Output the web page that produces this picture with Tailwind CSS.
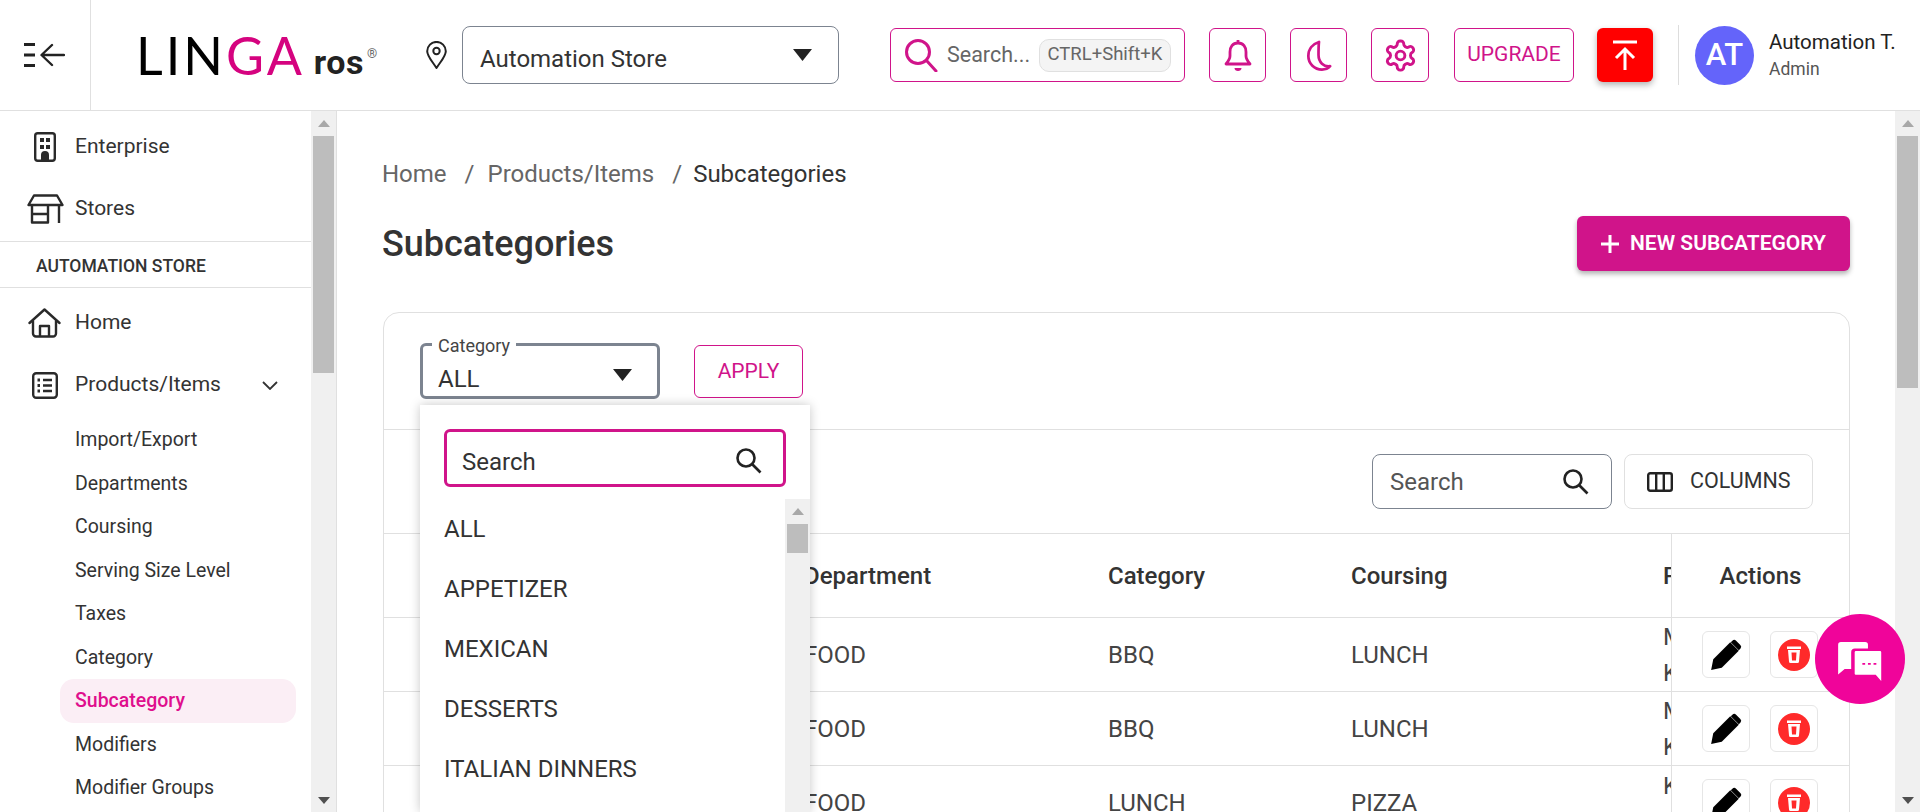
<!DOCTYPE html>
<html>
<head>
<meta charset="utf-8">
<script src="https://cdn.jsdelivr.net/npm/@tailwindcss/browser@4"></script>
</head>
<body class="m-0 h-screen overflow-hidden bg-white font-['Roboto',sans-serif] text-[#333]">
<div class="flex h-screen flex-col">
  <!-- header -->
  <header class="flex h-[111px] shrink-0 items-center border-b border-[#e0e0e0]">
    <div class="flex h-full w-[91px] shrink-0 items-center justify-center border-r border-[#e0e0e0] pr-[2px]">
      <svg width="42" height="26" viewBox="0 0 42 26" fill="none" stroke="#222" stroke-width="2.400"><path d="M1 2.500h11M1 13h11M1 23.500h11" stroke-width="3"/><path d="M41 13H20M29 3 18.500 13 29 23" stroke-linecap="round" stroke-linejoin="round"/></svg>
    </div>
    <div class="ml-[45px] flex w-[289px] shrink-0 items-end">
      <span class="font-['Lato',sans-serif] text-[52px] leading-[52px] font-normal tracking-[3px] text-black">LIN<span class="text-[#d5037f]">GA</span></span>
      <span class="ml-[9px] font-['Roboto',sans-serif] text-[34px] leading-[38px] font-bold tracking-[0.500px] text-[#222]">ros</span>
      <span class="mb-[20px] ml-[3px] text-[13px] leading-[14px] text-[#666]">®</span>
    </div>
    <svg class="ml-[1px] shrink-0" width="21" height="28" viewBox="0 0 21 28" fill="none" stroke="#222" stroke-width="2"><path d="M10.500 27C6 20 1.200 15 1.200 10.200a9.300 9.300 0 0 1 18.600 0C19.800 15 15 20 10.500 27Z" stroke-linejoin="round"/><circle cx="10.500" cy="10" r="3.200"/></svg>
    <div class="relative ml-[15px] flex h-[58px] w-[377px] shrink-0 items-center rounded-[8px] border border-[#7c8490] pt-[8px] pl-[17px] text-[24px] text-[#333]">Automation Store
      <svg class="absolute top-[22px] right-[26px]" width="19" height="12" viewBox="0 0 19 12"><path d="M0 0h19l-9.500 12Z" fill="#222"/></svg>
    </div>
    <div class="ml-[51px] flex h-[54px] w-[295px] shrink-0 items-center rounded-[6px] border border-[#d0148a] pl-[13px]">
      <svg width="34" height="34" viewBox="0 0 34 34" fill="none" stroke="#d0148a" stroke-width="3"><circle cx="14" cy="14" r="11.500"/><path d="M22.500 22.500 32 33" stroke-linecap="round"/></svg>
      <span class="ml-[9px] text-[21.500px] text-[#666]">Search...</span>
      <span class="mr-[13px] ml-auto flex h-[33px] w-[132px] items-center justify-center rounded-[10px] border border-[#e0e0e0] bg-[#f4f4f4] text-[18.500px] font-normal text-[#666]">CTRL+Shift+K</span>
    </div>
    <div class="ml-[24px] flex h-[54px] w-[57px] shrink-0 items-center justify-center rounded-[6px] border border-[#d0148a]">
      <svg width="28" height="34" viewBox="0 0 28 34" fill="none" stroke="#d0148a" stroke-width="2.800"><path d="M14 2v3M14 5c-5.500 0-8 4-8 9v4c0 3-1.500 5-4 8h24c-2.500-3-4-5-4-8v-4c0-5-2.500-9-8-9Z" stroke-linejoin="round"/><path d="M10.500 30h7c0 2-1.500 3-3.500 3s-3.500-1-3.500-3Z" fill="#d0148a" stroke="none"/></svg>
    </div>
    <div class="ml-[24px] flex h-[54px] w-[57px] shrink-0 items-center justify-center rounded-[6px] border border-[#d0148a]">
      <svg width="26" height="31" viewBox="0 0 26 32" fill="none" stroke="#d0148a" stroke-width="2.800"><path d="M13 2C6.500 4 2 9.500 2 16.500 2 24.500 8.500 30.500 16 30.500c3.500 0 6.500-1.200 8.500-3.500-6.500 1-12-4-12-11.500 0-5.500 0-10 .5-13.500Z" stroke-linejoin="round"/></svg>
    </div>
    <div class="ml-[24px] flex h-[54px] w-[58px] shrink-0 items-center justify-center rounded-[6px] border border-[#d0148a]">
      <svg width="35" height="35" viewBox="0 0 24 24" fill="none" stroke="#d0148a" stroke-width="2" stroke-linecap="round" stroke-linejoin="round"><path d="M12.220 2h-.44a2 2 0 0 0-2 2v.18a2 2 0 0 1-1 1.730l-.43.25a2 2 0 0 1-2 0l-.15-.08a2 2 0 0 0-2.730.73l-.22.38a2 2 0 0 0 .73 2.730l.15.1a2 2 0 0 1 1 1.720v.51a2 2 0 0 1-1 1.740l-.15.09a2 2 0 0 0-.73 2.730l.22.38a2 2 0 0 0 2.730.73l.15-.08a2 2 0 0 1 2 0l.43.25a2 2 0 0 1 1 1.730V20a2 2 0 0 0 2 2h.44a2 2 0 0 0 2-2v-.18a2 2 0 0 1 1-1.730l.43-.25a2 2 0 0 1 2 0l.15.08a2 2 0 0 0 2.730-.73l.22-.39a2 2 0 0 0-.73-2.730l-.15-.08a2 2 0 0 1-1-1.740v-.5a2 2 0 0 1 1-1.740l.15-.09a2 2 0 0 0 .73-2.730l-.22-.38a2 2 0 0 0-2.730-.73l-.15.08a2 2 0 0 1-2 0l-.43-.25a2 2 0 0 1-1-1.730V4a2 2 0 0 0-2-2z"/><circle cx="12" cy="12" r="3"/></svg>
    </div>
    <div class="ml-[25px] flex h-[54px] w-[120px] shrink-0 items-center justify-center rounded-[6px] border border-[#d0148a] text-[21px] font-normal text-[#d0148a]">UPGRADE</div>
    <div class="ml-[23px] flex h-[54px] w-[56px] shrink-0 items-center justify-center rounded-[6px] bg-[#ff0000] shadow-[0_3px_6px_rgba(0,0,0,0.3)]">
      <svg width="24" height="30" viewBox="0 0 24 30" fill="none" stroke="#fff" stroke-width="3"><path d="M0 2h24M12 30V10M3 18l9-9 9 9"/></svg>
    </div>
    <div class="ml-[25px] h-[60px] w-px shrink-0 bg-[#ddd]"></div>
    <div class="ml-[16px] flex h-[59px] w-[59px] shrink-0 items-center justify-center rounded-full bg-[#6464fa] text-[31px] font-medium text-white">AT</div>
    <div class="ml-[15px] shrink-0">
      <div class="text-[20.500px] leading-[22px] text-[#222]">Automation T.</div>
      <div class="mt-[6px] text-[17.500px] leading-[20px] text-[#555]">Admin</div>
    </div>
  </header>

  <div class="flex min-h-0 flex-1">
    <!-- sidebar -->
    <aside class="flex w-[337px] shrink-0 border-r border-[#e0e0e0]">
      <nav class="w-[311px] shrink-0 overflow-hidden">
        <div class="mt-[5px] flex h-[62px] items-center pl-[34px] text-[21px] text-[#333]">
          <svg class="mr-[19px] shrink-0" width="22" height="30" viewBox="0 0 22 30"><rect x="1.200" y="1.200" width="19.600" height="27.600" rx="2.500" fill="none" stroke="#2a2a2a" stroke-width="2.400"/><path d="M6 6h4v4H6zM12 6h4v4h-4zM6 13h4v4H6zM12 13h4v4h-4zM7 29v-6a4 4 0 0 1 8 0v6Z" fill="#2a2a2a"/></svg>Enterprise</div>
        <div class="flex h-[62px] items-center pl-[27px] text-[21px] text-[#333]">
          <svg class="mr-[11px] shrink-0" width="37" height="30" viewBox="0 0 37 30" fill="none" stroke="#2a2a2a" stroke-width="2.400" stroke-linejoin="round"><path d="M7 1.500h23l5.500 9.500H1.500Z"/><path d="M5 11v17.500h16V11M5 20h16M32 11v18"/></svg>Stores</div>
        <div class="mt-[1px] flex h-[47px] items-center border-y border-[#e0e0e0] pt-[3px] pl-[36px] text-[17.500px] font-medium text-[#333]">AUTOMATION STORE</div>
        <div class="mt-[4px] flex h-[62px] items-center pl-[28px] text-[21px] text-[#333]">
          <svg class="mr-[14px] shrink-0" width="33" height="30" viewBox="0 0 33 30" fill="none" stroke="#2a2a2a" stroke-width="2.400" stroke-linejoin="round" stroke-linecap="round"><path d="M1.500 15 16.500 1.500 31.500 15"/><path d="M5 13v12.500a3 3 0 0 0 3 3h17a3 3 0 0 0 3-3V13M12 28.500V18h9v10.500"/></svg>Home</div>
        <div class="flex h-[62px] items-center pl-[32px] text-[21px] text-[#333]">
          <svg class="mr-[17px] shrink-0" width="26" height="27" viewBox="0 0 26 27" fill="none" stroke="#2a2a2a" stroke-width="2.400"><rect x="1.200" y="1.200" width="23.600" height="24.600" rx="3"/><path d="M11 8h9M11 13.500h9M11 19h9"/><path d="M5.500 8h2.500M5.500 13.500h2.500M5.500 19h2.500" stroke-width="2.800"/></svg>Products/Items
          <svg class="ml-[41px]" width="16" height="9" viewBox="0 0 16 9" fill="none" stroke="#333" stroke-width="1.800"><path d="m1 1 7 7 7-7"/></svg>
        </div>
        <div class="mt-[2px] flex flex-col pl-[60px] text-[19.500px] text-[#333]">
          <div class="flex h-[43.500px] items-center pl-[15px]">Import/Export</div>
          <div class="flex h-[43.500px] items-center pl-[15px]">Departments</div>
          <div class="flex h-[43.500px] items-center pl-[15px]">Coursing</div>
          <div class="flex h-[43.500px] items-center pl-[15px]">Serving Size Level</div>
          <div class="flex h-[43.500px] items-center pl-[15px]">Taxes</div>
          <div class="flex h-[43.500px] items-center pl-[15px]">Category</div>
          <div class="flex h-[43.500px] w-[236px] items-center rounded-[14px] bg-[#fbeef5] pl-[15px] font-medium text-[#df0f8d]">Subcategory</div>
          <div class="flex h-[43.500px] items-center pl-[15px]">Modifiers</div>
          <div class="flex h-[43.500px] items-center pl-[15px]">Modifier Groups</div>
        </div>
      </nav>
      <div class="flex w-[25px] shrink-0 flex-col items-center bg-[#f0f0f0]">
        <svg class="mt-[9px] mb-[9px] shrink-0" width="12" height="7" viewBox="0 0 12 7"><path d="M6 0l6 7H0Z" fill="#a8a8a8"/></svg>
        <div class="h-[237px] w-[21px] shrink-0 bg-[#bdbdbd]"></div>
        <div class="flex-1"></div>
        <svg class="mb-[8px] shrink-0" width="12" height="7" viewBox="0 0 12 7"><path d="M6 7 12 0H0Z" fill="#505050"/></svg>
      </div>
    </aside>

    <!-- main -->
    <main class="relative flex min-w-0 flex-1">
      <div class="w-[1558px] shrink-0 overflow-hidden pl-[45px]">
        <div class="mt-[48px] flex h-[30px] items-center text-[24px] text-[#666]">
          <span>Home</span><span class="ml-[18px]">/</span><span class="ml-[13px]">Products/Items</span><span class="ml-[18px]">/</span><span class="ml-[11px] text-[#333]">Subcategories</span>
        </div>
        <div class="mt-[27px] flex h-[55px] w-[1468px] items-center justify-between">
          <h1 class="text-[36px] font-medium text-[#333]">Subcategories</h1>
          <button class="flex h-[55px] w-[273px] items-center justify-center rounded-[6px] bg-[#d0148a] text-[21px] font-semibold text-white shadow-[0_3px_5px_rgba(0,0,0,0.3)]">
            <svg class="mr-[11px]" width="18" height="18" viewBox="0 0 18 18" stroke="#fff" stroke-width="3"><path d="M9 0v18M0 9h18"/></svg>NEW SUBCATEGORY</button>
        </div>
        <section class="mt-[41px] ml-[1px] h-[600px] w-[1467px] rounded-[16px] border border-[#e0e0e0]">
          <div class="flex h-[117px] items-start border-b border-[#e0e0e0] pl-[36px]">
            <div class="relative mt-[30px] h-[56px] w-[240px] rounded-[6px] border-[3px] border-[#7c8490] pt-[17px] pl-[15px] text-[24px] leading-[32px] text-[#333]">ALL
              <span class="absolute -top-[10px] left-[9px] bg-white px-[6px] text-[18px] leading-[20px] text-[#444]">Category</span>
              <svg class="absolute top-[23px] right-[25px]" width="19" height="12" viewBox="0 0 19 12"><path d="M0 0h19l-9.500 12Z" fill="#222"/></svg>
            </div>
            <button class="mt-[32px] ml-[34px] flex h-[53px] w-[109px] items-center justify-center rounded-[6px] border border-[#d0148a] text-[21px] font-normal text-[#d0148a]">APPLY</button>
          </div>
          <div class="flex h-[104px] items-center justify-end border-b border-[#e0e0e0] pr-[36px]">
            <div class="flex h-[55px] w-[240px] items-center justify-between rounded-[8px] border border-[#7c8490] pr-[22px] pl-[17px] text-[24px] text-[#555]">Search
              <svg width="27" height="27" viewBox="0 0 27 27" fill="none" stroke="#222" stroke-width="2.600"><circle cx="11" cy="11" r="8.500"/><path d="m17.500 17.500 8 8"/></svg>
            </div>
            <div class="ml-[12px] flex h-[55px] w-[189px] items-center rounded-[8px] border border-[#e0e0e0] pl-[22px] text-[21.500px] font-normal text-[#333]">
              <svg class="mr-[17px]" width="26" height="20" viewBox="0 0 26 20" fill="none" stroke="#222" stroke-width="2.400"><rect x="1.200" y="1.200" width="23.600" height="17.600" rx="2"/><path d="M9.200 1v18M16.800 1v18"/></svg>COLUMNS
            </div>
          </div>
          <!-- table -->
          <div class="grid grid-cols-[420px_304px_243px_312px_8px_1fr]">
            <div class="col-span-6 grid h-[84px] grid-cols-subgrid items-center border-b border-[#e0e0e0] text-[24px] font-medium text-[#333]">
              <div></div><div>Department</div><div>Category</div><div>Coursing</div><div class="w-[8px] overflow-hidden">Portion</div><div class="flex h-full items-center justify-center border-l border-[#e0e0e0]">Actions</div>
            </div>
            <div class="col-span-6 grid h-[74px] grid-cols-subgrid items-center border-b border-[#e0e0e0] text-[24px] text-[#444]">
              <div></div><div>FOOD</div><div>BBQ</div><div>LUNCH</div>
              <div class="w-[8px] overflow-hidden leading-[36px]">Main<br>Kitchen</div>
              <div class="flex h-full items-center gap-[20px] border-l border-[#e0e0e0] pl-[30px]">
                <div class="flex h-[47px] w-[48px] items-center justify-center rounded-[6px] border border-[#e6e6e6]"><svg width="34" height="34" viewBox="0 0 32 32"><path d="M2 30 4 20 20 4l8 8L12 28ZM22 2.500a2.500 2.500 0 0 1 3.500 0l4 4a2.500 2.500 0 0 1 0 3.500L28 11.500 20.500 4Z" fill="#000"/></svg></div>
                <div class="flex h-[47px] w-[48px] items-center justify-center rounded-[6px] border border-[#e6e6e6]"><svg width="32" height="32" viewBox="0 0 32 32"><circle cx="16" cy="16" r="16" fill="#ff2a2a"/><path fill-rule="evenodd" d="M9 7.500h14V10H9zM10 11h12l-1 11.500a1.500 1.500 0 0 1-1.500 1.500h-7a1.500 1.500 0 0 1-1.500-1.500ZM13.500 13.500l.5 8h4l.5-8Z" fill="#fff"/></svg></div>
              </div>
            </div>
            <div class="col-span-6 grid h-[74px] grid-cols-subgrid items-center border-b border-[#e0e0e0] text-[24px] text-[#444]">
              <div></div><div>FOOD</div><div>BBQ</div><div>LUNCH</div>
              <div class="w-[8px] overflow-hidden leading-[36px]">Main<br>Kitchen</div>
              <div class="flex h-full items-center gap-[20px] border-l border-[#e0e0e0] pl-[30px]">
                <div class="flex h-[47px] w-[48px] items-center justify-center rounded-[6px] border border-[#e6e6e6]"><svg width="34" height="34" viewBox="0 0 32 32"><path d="M2 30 4 20 20 4l8 8L12 28ZM22 2.500a2.500 2.500 0 0 1 3.500 0l4 4a2.500 2.500 0 0 1 0 3.500L28 11.500 20.500 4Z" fill="#000"/></svg></div>
                <div class="flex h-[47px] w-[48px] items-center justify-center rounded-[6px] border border-[#e6e6e6]"><svg width="32" height="32" viewBox="0 0 32 32"><circle cx="16" cy="16" r="16" fill="#ff2a2a"/><path fill-rule="evenodd" d="M9 7.500h14V10H9zM10 11h12l-1 11.500a1.500 1.500 0 0 1-1.500 1.500h-7a1.500 1.500 0 0 1-1.500-1.500ZM13.500 13.500l.5 8h4l.5-8Z" fill="#fff"/></svg></div>
              </div>
            </div>
            <div class="col-span-6 grid h-[74px] grid-cols-subgrid items-center border-b border-[#e0e0e0] text-[24px] text-[#444]">
              <div></div><div>FOOD</div><div>LUNCH</div><div>PIZZA</div>
              <div class="w-[8px] self-start overflow-hidden pt-[2px] leading-[36px]">Kitchen</div>
              <div class="flex h-full items-center gap-[20px] border-l border-[#e0e0e0] pl-[30px]">
                <div class="flex h-[47px] w-[48px] items-center justify-center rounded-[6px] border border-[#e6e6e6]"><svg width="34" height="34" viewBox="0 0 32 32"><path d="M2 30 4 20 20 4l8 8L12 28ZM22 2.500a2.500 2.500 0 0 1 3.500 0l4 4a2.500 2.500 0 0 1 0 3.500L28 11.500 20.500 4Z" fill="#000"/></svg></div>
                <div class="flex h-[47px] w-[48px] items-center justify-center rounded-[6px] border border-[#e6e6e6]"><svg width="32" height="32" viewBox="0 0 32 32"><circle cx="16" cy="16" r="16" fill="#ff2a2a"/><path fill-rule="evenodd" d="M9 7.500h14V10H9zM10 11h12l-1 11.500a1.500 1.500 0 0 1-1.500 1.500h-7a1.500 1.500 0 0 1-1.500-1.500ZM13.500 13.500l.5 8h4l.5-8Z" fill="#fff"/></svg></div>
              </div>
            </div>
          </div>
        </section>
      </div>
      <div class="flex w-[25px] shrink-0 flex-col items-center bg-[#f0f0f0]">
        <svg class="mt-[9px] mb-[9px] shrink-0" width="12" height="7" viewBox="0 0 12 7"><path d="M6 0l6 7H0Z" fill="#a8a8a8"/></svg>
        <div class="h-[252px] w-[21px] shrink-0 bg-[#bdbdbd]"></div>
        <div class="flex-1"></div>
        <svg class="mb-[8px] shrink-0" width="12" height="7" viewBox="0 0 12 7"><path d="M6 7 12 0H0Z" fill="#505050"/></svg>
      </div>

      <!-- dropdown overlay -->
      <div class="absolute top-[294px] left-[83px] flex h-[407px] w-[390px] flex-col bg-white shadow-[0_0_10px_rgba(0,0,0,0.22)]">
        <div class="mt-[24px] ml-[24px] flex h-[58px] w-[342px] shrink-0 items-center justify-between rounded-[6px] border-[3px] border-[#d0148a] pt-[8px] pr-[21px] pl-[15px] text-[24px] text-[#333]">Search
          <svg class="-mt-[4px]" width="27" height="27" viewBox="0 0 27 27" fill="none" stroke="#222" stroke-width="2.600"><circle cx="11" cy="11" r="8.500"/><path d="m17.500 17.500 8 8"/></svg>
        </div>
        <div class="relative mt-[12px] min-h-0 flex-1">
          <div class="pl-[24px] text-[24px] text-[#333]">
            <div class="flex h-[60px] items-center">ALL</div>
            <div class="flex h-[60px] items-center">APPETIZER</div>
            <div class="flex h-[60px] items-center">MEXICAN</div>
            <div class="flex h-[60px] items-center">DESSERTS</div>
            <div class="flex h-[60px] items-center">ITALIAN DINNERS</div>
          </div>
          <div class="absolute top-0 right-0 bottom-0 flex w-[25px] flex-col items-center bg-[#f0f0f0]">
            <svg class="mt-[9px] mb-[9px] shrink-0" width="12" height="7" viewBox="0 0 12 7"><path d="M6 0l6 7H0Z" fill="#a8a8a8"/></svg>
            <div class="h-[29px] w-[21px] bg-[#bdbdbd]"></div>
          </div>
        </div>
      </div>
    </main>
  </div>

  <!-- chat bubble -->
  <div class="fixed top-[614px] left-[1815px] flex h-[90px] w-[90px] items-center justify-center rounded-full bg-[#f0049a]">
    <svg class="mt-[7px]" width="47" height="41" viewBox="0 0 48 44"><path d="M3 0h26a3 3 0 0 1 3 3v4H18a4 4 0 0 0-4 4v18H7l-7 6V3a3 3 0 0 1 3-3Z" fill="#fff"/><path d="M17 11a2 2 0 0 1 2-2h26a2 2 0 0 1 2 2v22.500V44l-7-8H19a2 2 0 0 1-2-2Z" fill="#fff" stroke="#f0049a" stroke-width="1.500"/><path d="M26 23.500h3M32 23.500h3M38 23.500h3" stroke="#f0049a" stroke-width="2"/></svg>
  </div>
</div>
</body>
</html>
